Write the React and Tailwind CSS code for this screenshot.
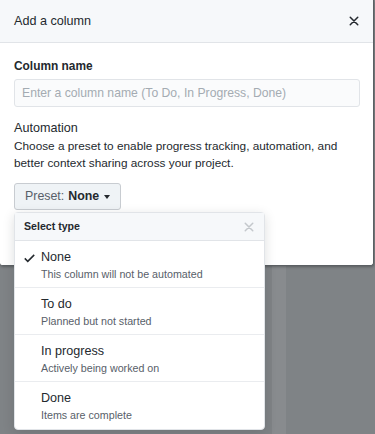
import { useState } from 'react';

// Add-a-column dialog with the automation preset menu opened over it.

const presets = [
  { name: 'None', hint: 'This column will not be automated' },
  { name: 'To do', hint: 'Planned but not started' },
  { name: 'In progress', hint: 'Actively being worked on' },
  { name: 'Done', hint: 'Items are complete' },
];

function Check() {
  return (
    <svg width="11" height="14" viewBox="0 0 12 16" className="fill-[#24292e]">
      <path d="M12 5l-8 8-4-4 1.2-1.2L4 10.6l6.8-6.8L12 5z" />
    </svg>
  );
}

function Cross({ className, size = 11 }) {
  return (
    <svg width={size} height={size} viewBox="0 0 12 12" className={className}>
      <path d="M1.5 1.5l9 9M10.5 1.5l-9 9" strokeWidth="1.8" strokeLinecap="round" />
    </svg>
  );
}

export default function App() {
  const [selected] = useState('None');

  return (
    <div className="relative h-[434px] w-[375px] overflow-hidden bg-[#7f8386] font-['Liberation_Sans',Arial,sans-serif] text-[#24292e]">
      <div className="ml-[272px] h-full w-[14px] bg-[#888b8e]" />

      <div className="absolute left-0 top-0 w-[374px] rounded-b-[3px] border-r border-b border-[#5c6064] bg-white shadow-[0_1px_3px_rgba(0,0,0,0.3)]">
        <div className="flex h-[43px] items-center justify-between border-b border-[#e1e4e8] bg-[#f6f8fa] pl-[14px] pr-[14px]">
          <span className="text-[12.6px]">Add a column</span>
          <Cross className="stroke-[#24292e]" size={10} />
        </div>

        <div className="relative px-[14px] pb-[13px] pt-[13px]">
          <div className="text-[11.9px] font-bold leading-[20px]">Column name</div>
          <input
            className="mt-[3px] h-[28px] w-[346px] rounded-[3px] border border-[#e1e4e8] bg-[#fafbfc] px-[7px] text-[12.2px] placeholder:text-[#a4abb2] outline-none"
            placeholder="Enter a column name (To Do, In Progress, Done)"
          />

          <div className="mt-[11px] text-[12.6px] leading-[20px]">Automation</div>
          <p className="text-[11.8px] leading-[17px] text-[#24292e]">
            Choose a preset to enable progress tracking, automation, and better context sharing across your project.
          </p>

          <button className="mt-[11px] flex h-[27px] items-center gap-[4px] rounded-[3px] border border-[#c8ccd1] bg-[#eff3f6] px-[10px] text-[12.4px]">
            <span className="text-[#586069]">Preset:</span>
            <span className="font-bold">None</span>
            <span className="ml-[1px] h-0 w-0 border-x-[3.5px] border-t-[4px] border-x-transparent border-t-[#24292e]" />
          </button>

          <div className="mt-[14px] h-[28px] w-[120px] rounded-[3px] border border-[#c8ccd1] bg-[#eff3f6]" />

          <div className="absolute left-[14px] top-[169px] z-10 w-[251px] rounded-[4px] border border-[#e1e4e8] bg-white shadow-[0_3px_12px_rgba(27,31,35,0.15)]">
            <div className="flex h-[28px] items-center justify-between border-b border-[#e1e4e8] bg-[#f6f8fa] pl-[9px] pr-[10px]">
              <span className="text-[10.6px] font-bold">Select type</span>
              <Cross className="stroke-[#c4c8cc]" size={10} />
            </div>
            {presets.map((p, i) => (
              <div
                key={p.name}
                className={`flex h-[47px] items-start pt-[7px] ${i < presets.length - 1 ? 'border-b border-[#eaecef]' : ''}`}
              >
                <div className="flex w-[26px] justify-start pl-[9px] pt-[3px]">
                  {p.name === selected && <Check />}
                </div>
                <div>
                  <div className="text-[12.6px] leading-[18px]">{p.name}</div>
                  <div className="text-[10.7px] leading-[16px] text-[#586069]">{p.hint}</div>
                </div>
              </div>
            ))}
          </div>
        </div>
      </div>
    </div>
  );
}
